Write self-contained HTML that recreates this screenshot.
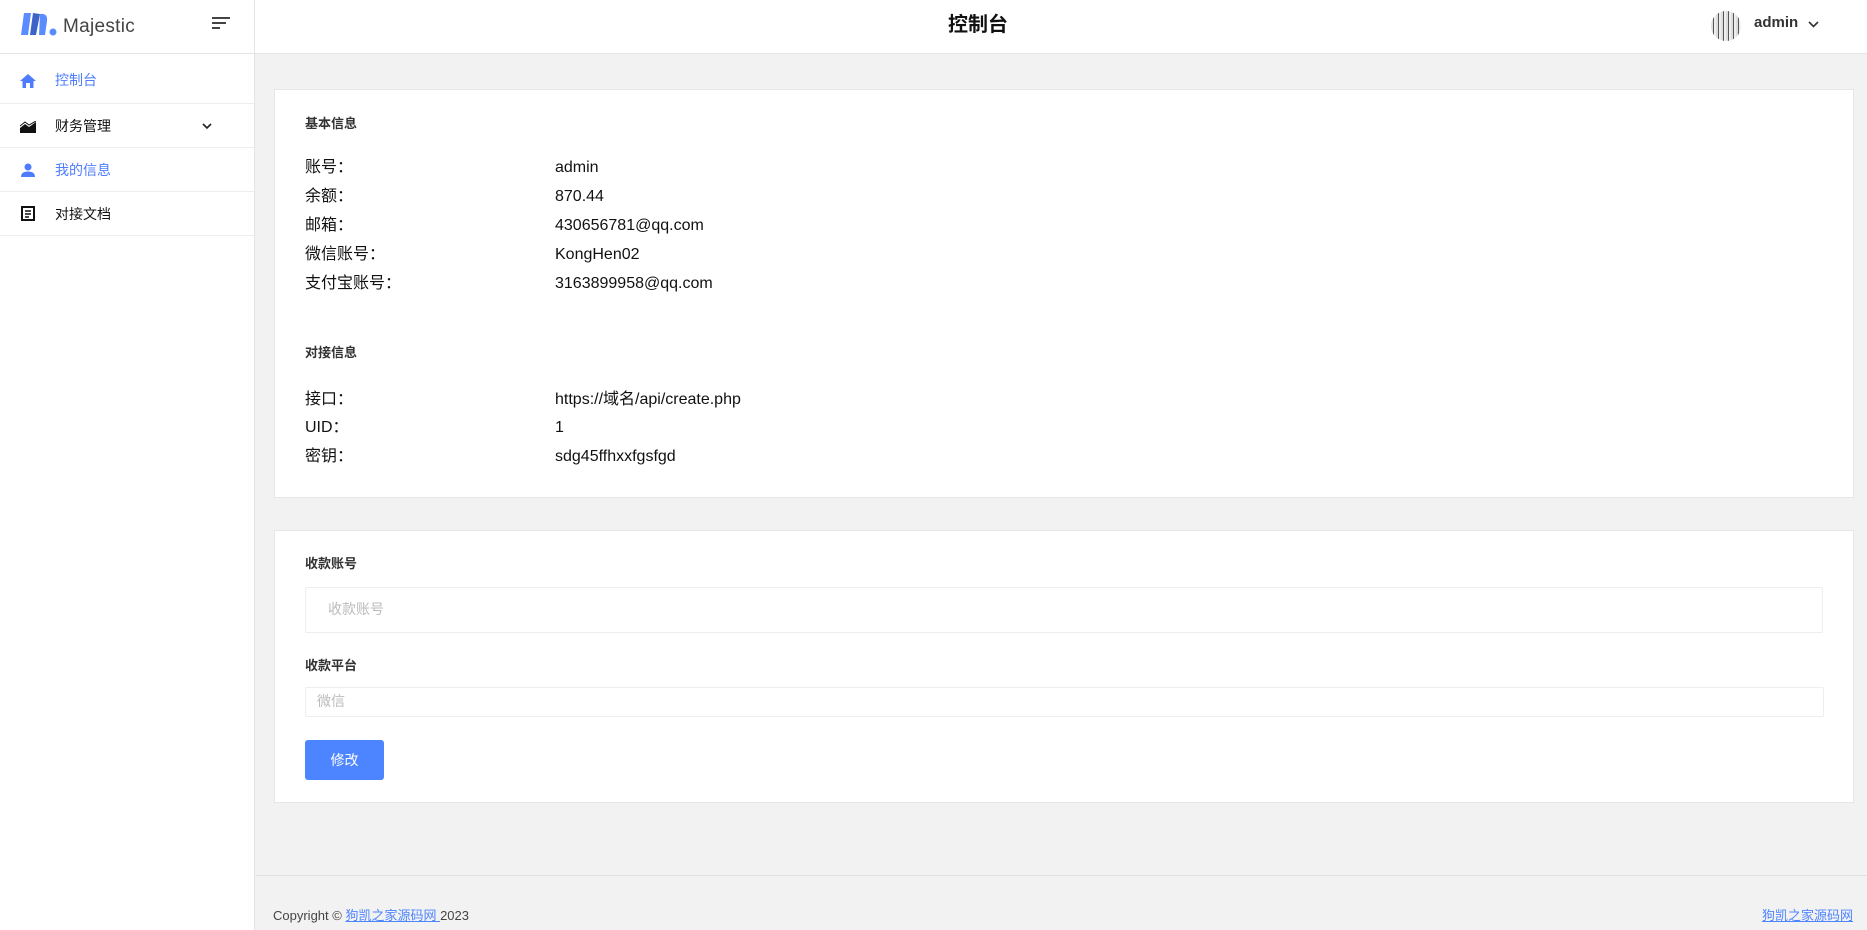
<!DOCTYPE html>
<html><head><meta charset="utf-8"><style>
*{margin:0;padding:0;box-sizing:border-box}
body{width:1867px;height:930px;background:#f2f2f2;font-family:"Liberation Sans","Noto Sans CJK SC",sans-serif;position:relative;overflow:hidden;color:#111;line-height:1.2}
.abs{position:absolute}
#side{left:0;top:0;width:255px;height:930px;background:#fff;border-right:1px solid #e4e4e4}
#top{left:255px;top:0;right:0;height:54px;background:#fff;border-bottom:1px solid #e4e4e4}
.logo{left:0;top:0;width:255px;height:54px;border-bottom:1px solid #e4e4e4}
.mi{position:absolute;left:0;width:254px;border-bottom:1px solid #eee;font-size:14px}
.mi span{position:absolute;left:55px;line-height:18px}
.card{background:#fff;border:1px solid #e6e6e6;left:274px;width:1580px}
.t{position:absolute;font-size:16px;line-height:20px;height:20px}
.h{position:absolute;font-size:13px;font-weight:bold;color:#333;line-height:16px}
</style></head><body>
<div id="side" class="abs">
 <div class="logo abs">
  <svg class="abs" style="left:21px;top:11px" width="36" height="26" viewBox="0 0 36 26"><path d="M3 2 L10 2 L7 24 L0 24Z" fill="#5a8cff"/><path d="M12 2 L19 3 L15 24 L9 24Z" fill="#3d63c9"/><path d="M19 3 Q27 2 26 10 L24 24 L18 24Z" fill="#5a8cff"/><circle cx="32" cy="21" r="3.5" fill="#5a8cff"/></svg>
  <div class="abs" style="left:63px;top:16px;font-size:19px;color:#444;letter-spacing:.3px">Majestic</div>
  <div class="abs" style="left:212px;top:17px;width:18px;height:2px;background:#444"></div>
  <div class="abs" style="left:212px;top:22px;width:14px;height:2px;background:#444"></div>
  <div class="abs" style="left:212px;top:27px;width:8px;height:2px;background:#444"></div>
 </div>
 <div class="mi" style="top:54px;height:50px;color:#4d7cfe"><svg class="abs" style="left:20px;top:20px" width="16" height="14" viewBox="0 0 16 14"><path d="M8 0 L16 7 L13.5 7 L13.5 14 L10 14 L10 9 L6 9 L6 14 L2.5 14 L2.5 7 L0 7Z" fill="#4d7cfe"/></svg><span style="top:17px">控制台</span></div>
 <div class="mi" style="top:104px;height:44px"><svg class="abs" style="left:20px;top:17px" width="16" height="12" viewBox="0 0 16 12"><path d="M0 12 L0 7 L5 3 L9 6 L16 1 L16 12Z" fill="#111"/><path d="M0 5 L5 1 L9 4 L16 0" stroke="#111" fill="none"/></svg><span style="top:13px">财务管理</span><svg class="abs" style="left:202px;top:19px" width="10" height="7"><path d="M1 1 L5 5 L9 1" stroke="#222" stroke-width="1.6" fill="none"/></svg></div>
 <div class="mi" style="top:148px;height:44px;color:#4d7cfe"><svg class="abs" style="left:21px;top:15px" width="14" height="14" viewBox="0 0 14 14"><circle cx="7" cy="4" r="3.5" fill="#4d7cfe"/><path d="M0 14 Q0 8.5 7 8.5 Q14 8.5 14 14Z" fill="#4d7cfe"/></svg><span style="top:13px">我的信息</span></div>
 <div class="mi" style="top:192px;height:44px"><svg class="abs" style="left:21px;top:14px" width="14" height="15" viewBox="0 0 14 15"><rect x="1" y="1" width="12" height="13" fill="none" stroke="#111" stroke-width="2"/><path d="M4 5h6M4 8h6M4 11h4" stroke="#111" stroke-width="1.5"/></svg><span style="top:13px">对接文档</span></div>
</div>
<div id="top" class="abs">
 <div class="abs" style="left:693px;top:13px;font-size:20px;font-weight:bold;line-height:24px">控制台</div>
 <div class="abs" style="left:1456px;top:11px;width:30px;height:30px;border-radius:50%;background:repeating-linear-gradient(90deg,#ddd 0 2px,#555 2px 3px,#eee 3px 5px)"></div>
 <div class="abs" style="left:1499px;top:14px;font-size:15px;font-weight:bold;color:#333">admin</div>
 <svg class="abs" style="left:1553px;top:21px" width="11" height="8"><path d="M1 1 L5.5 5.5 L10 1" stroke="#333" stroke-width="1.6" fill="none"/></svg>
</div>
<div class="card abs" style="top:89px;height:409px">
 <div class="h" style="left:30px;top:26px">基本信息</div>
 <div class="t" style="left:30px;top:68px">账号：</div><div class="t" style="left:280px;top:68px">admin</div>
 <div class="t" style="left:30px;top:97px">余额：</div><div class="t" style="left:280px;top:97px">870.44</div>
 <div class="t" style="left:30px;top:126px">邮箱：</div><div class="t" style="left:280px;top:126px">430656781@qq.com</div>
 <div class="t" style="left:30px;top:155px">微信账号：</div><div class="t" style="left:280px;top:155px">KongHen02</div>
 <div class="t" style="left:30px;top:184px">支付宝账号：</div><div class="t" style="left:280px;top:184px">3163899958@qq.com</div>
 <div class="h" style="left:30px;top:255px">对接信息</div>
 <div class="t" style="left:30px;top:300px">接口：</div><div class="t" style="left:280px;top:300px">https://域名/api/create.php</div>
 <div class="t" style="left:30px;top:328px">UID：</div><div class="t" style="left:280px;top:328px">1</div>
 <div class="t" style="left:30px;top:357px">密钥：</div><div class="t" style="left:280px;top:357px">sdg45ffhxxfgsfgd</div>
</div>
<div class="card abs" style="top:530px;height:273px">
 <div class="h" style="left:30px;top:25px">收款账号</div>
 <div class="abs" style="left:30px;top:56px;width:1518px;height:46px;border:1px solid #eee;border-radius:2px"><div class="abs" style="left:22px;top:13px;font-size:14px;color:#bbb">收款账号</div></div>
 <div class="h" style="left:30px;top:127px">收款平台</div>
 <div class="abs" style="left:30px;top:156px;width:1519px;height:30px;border:1px solid #eee;border-radius:2px"><div class="abs" style="left:11px;top:5px;font-size:14px;color:#bbb">微信</div></div>
 <div class="abs" style="left:30px;top:209px;width:79px;height:40px;background:#4d84ff;border-radius:3px;color:#fff;font-size:14px;text-align:center;line-height:40px">修改</div>
</div>
<div class="abs" style="left:256px;top:875px;right:0;height:1px;background:#e0e0e0"></div>
<div class="abs" style="left:273px;top:908px;font-size:13px;color:#444">Copyright © <span style="color:#4d84ff;text-decoration:underline">狗凯之家源码网 </span>2023</div>
<div class="abs" style="right:14px;top:908px;font-size:13px;color:#4d84ff;text-decoration:underline">狗凯之家源码网</div>
</body></html>
